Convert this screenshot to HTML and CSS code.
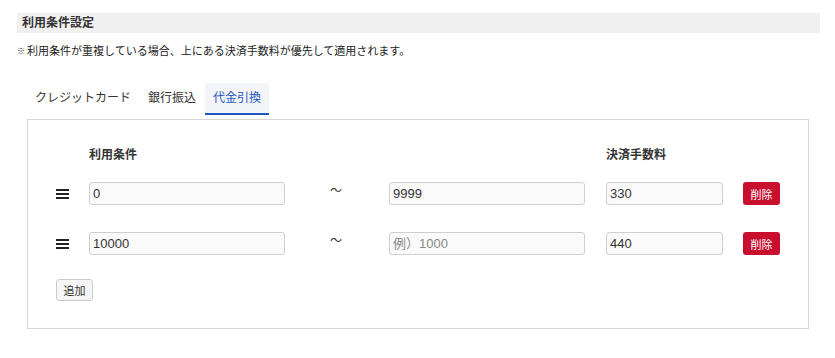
FILE: index.html
```html
<!DOCTYPE html>
<html lang="ja">
<head>
<meta charset="utf-8">
<link rel="stylesheet" href="styles.css">
</head>
<body>
<div class="page">
  <div class="section-title">利用条件設定</div>
  <p class="note"><span class="mark">※</span>利用条件が重複している場合、上にある決済手数料が優先して適用されます。</p>
  <div class="tabs">
    <div class="tab">クレジットカード</div>
    <div class="tab">銀行振込</div>
    <div class="tab active">代金引換</div>
  </div>
  <div class="panel">
    <div class="grid">
      <div></div>
      <div class="label">利用条件</div>
      <div></div>
      <div></div>
      <div class="label">決済手数料</div>
      <div></div>

      <div class="handle"><span></span><span></span><span></span></div>
      <input class="field" type="text" value="0">
      <div class="tilde">～</div>
      <input class="field" type="text" value="9999">
      <input class="field fee" type="text" value="330">
      <button class="del">削除</button>

      <div class="handle"><span></span><span></span><span></span></div>
      <input class="field" type="text" value="10000">
      <div class="tilde">～</div>
      <input class="field" type="text" placeholder="例）1000">
      <input class="field fee" type="text" value="440">
      <button class="del">削除</button>
    </div>
    <button class="add">追加</button>
  </div>
</div>
</body>
</html>
```
FILE: styles.css
```css
* { box-sizing: border-box; }
body {
  margin: 0;
  background: #fff;
  font-family: "Liberation Sans", "Noto Sans CJK JP", sans-serif;
  color: #333;
}
.page {
  padding: 13px 15px 0 17px;
}
.section-title {
  height: 20px;
  line-height: 20px;
  background: #f0f0f0;
  font-size: 12px;
  font-weight: bold;
  padding-left: 5px;
  color: #333;
}
.note {
  margin: 10px 0 0 0;
  font-size: 11px;
  line-height: 16px;
  color: #222;
}
.note .mark {
  font-size: 8px;
  font-weight: bold;
  color: #333;
  margin-right: 2px;
  vertical-align: 1px;
}
.tabs {
  display: flex;
  gap: 1px;
  margin: 23px 0 0 10px;
}
.tab {
  height: 32px;
  padding: 0 8px;
  line-height: 31px;
  font-size: 12px;
  color: #333;
  border-bottom: 2px solid transparent;
}
.tab.active {
  background: #f3f4f7;
  color: #1f56c4;
  border-bottom-color: #1f56c4;
}
.panel {
  margin: 4px 11px 0 10px;
  border: 1px solid #d8d8d8;
  height: 210px;
  padding: 28px 0 0 28px;
}
.grid {
  display: grid;
  grid-template-columns: 33px 196px 104px 217px 137px 37px;
  row-gap: 27px;
  align-items: center;
}
.label {
  font-size: 12px;
  font-weight: bold;
  line-height: 15px;
  color: #333;
  margin-bottom: -8px;
}
.handle {
  display: flex;
  flex-direction: column;
  gap: 2px;
  width: 13px;
}
.handle span {
  display: block;
  height: 2px;
  background: #222;
}
.field {
  height: 23px;
  border: 1px solid #cfcfcf;
  border-radius: 3px;
  background: #fafafa;
  font-family: "Liberation Sans", "Noto Sans CJK JP", sans-serif;
  font-size: 13px;
  color: #333;
  padding: 0 3px;
  width: 196px;
  margin: 0;
  outline: none;
}
.field::placeholder {
  color: #888;
}
.field.fee {
  width: 117px;
}
.tilde {
  font-size: 12px;
  text-align: center;
  align-self: start;
  margin-top: -1px;
  padding-right: 2px;
  color: #333;
}
.del {
  width: 37px;
  height: 23px;
  border: none;
  border-radius: 3px;
  background: #c8102e;
  color: #fff;
  font-family: "Noto Sans CJK JP", sans-serif;
  font-size: 11px;
  padding: 0;
  margin: 0;
}
.add {
  display: block;
  margin-top: 24px;
  width: 37px;
  height: 22px;
  border: 1px solid #cccccc;
  border-radius: 3px;
  background: #f5f5f5;
  color: #333;
  font-family: "Noto Sans CJK JP", sans-serif;
  font-size: 11px;
  padding: 0;
}
```
